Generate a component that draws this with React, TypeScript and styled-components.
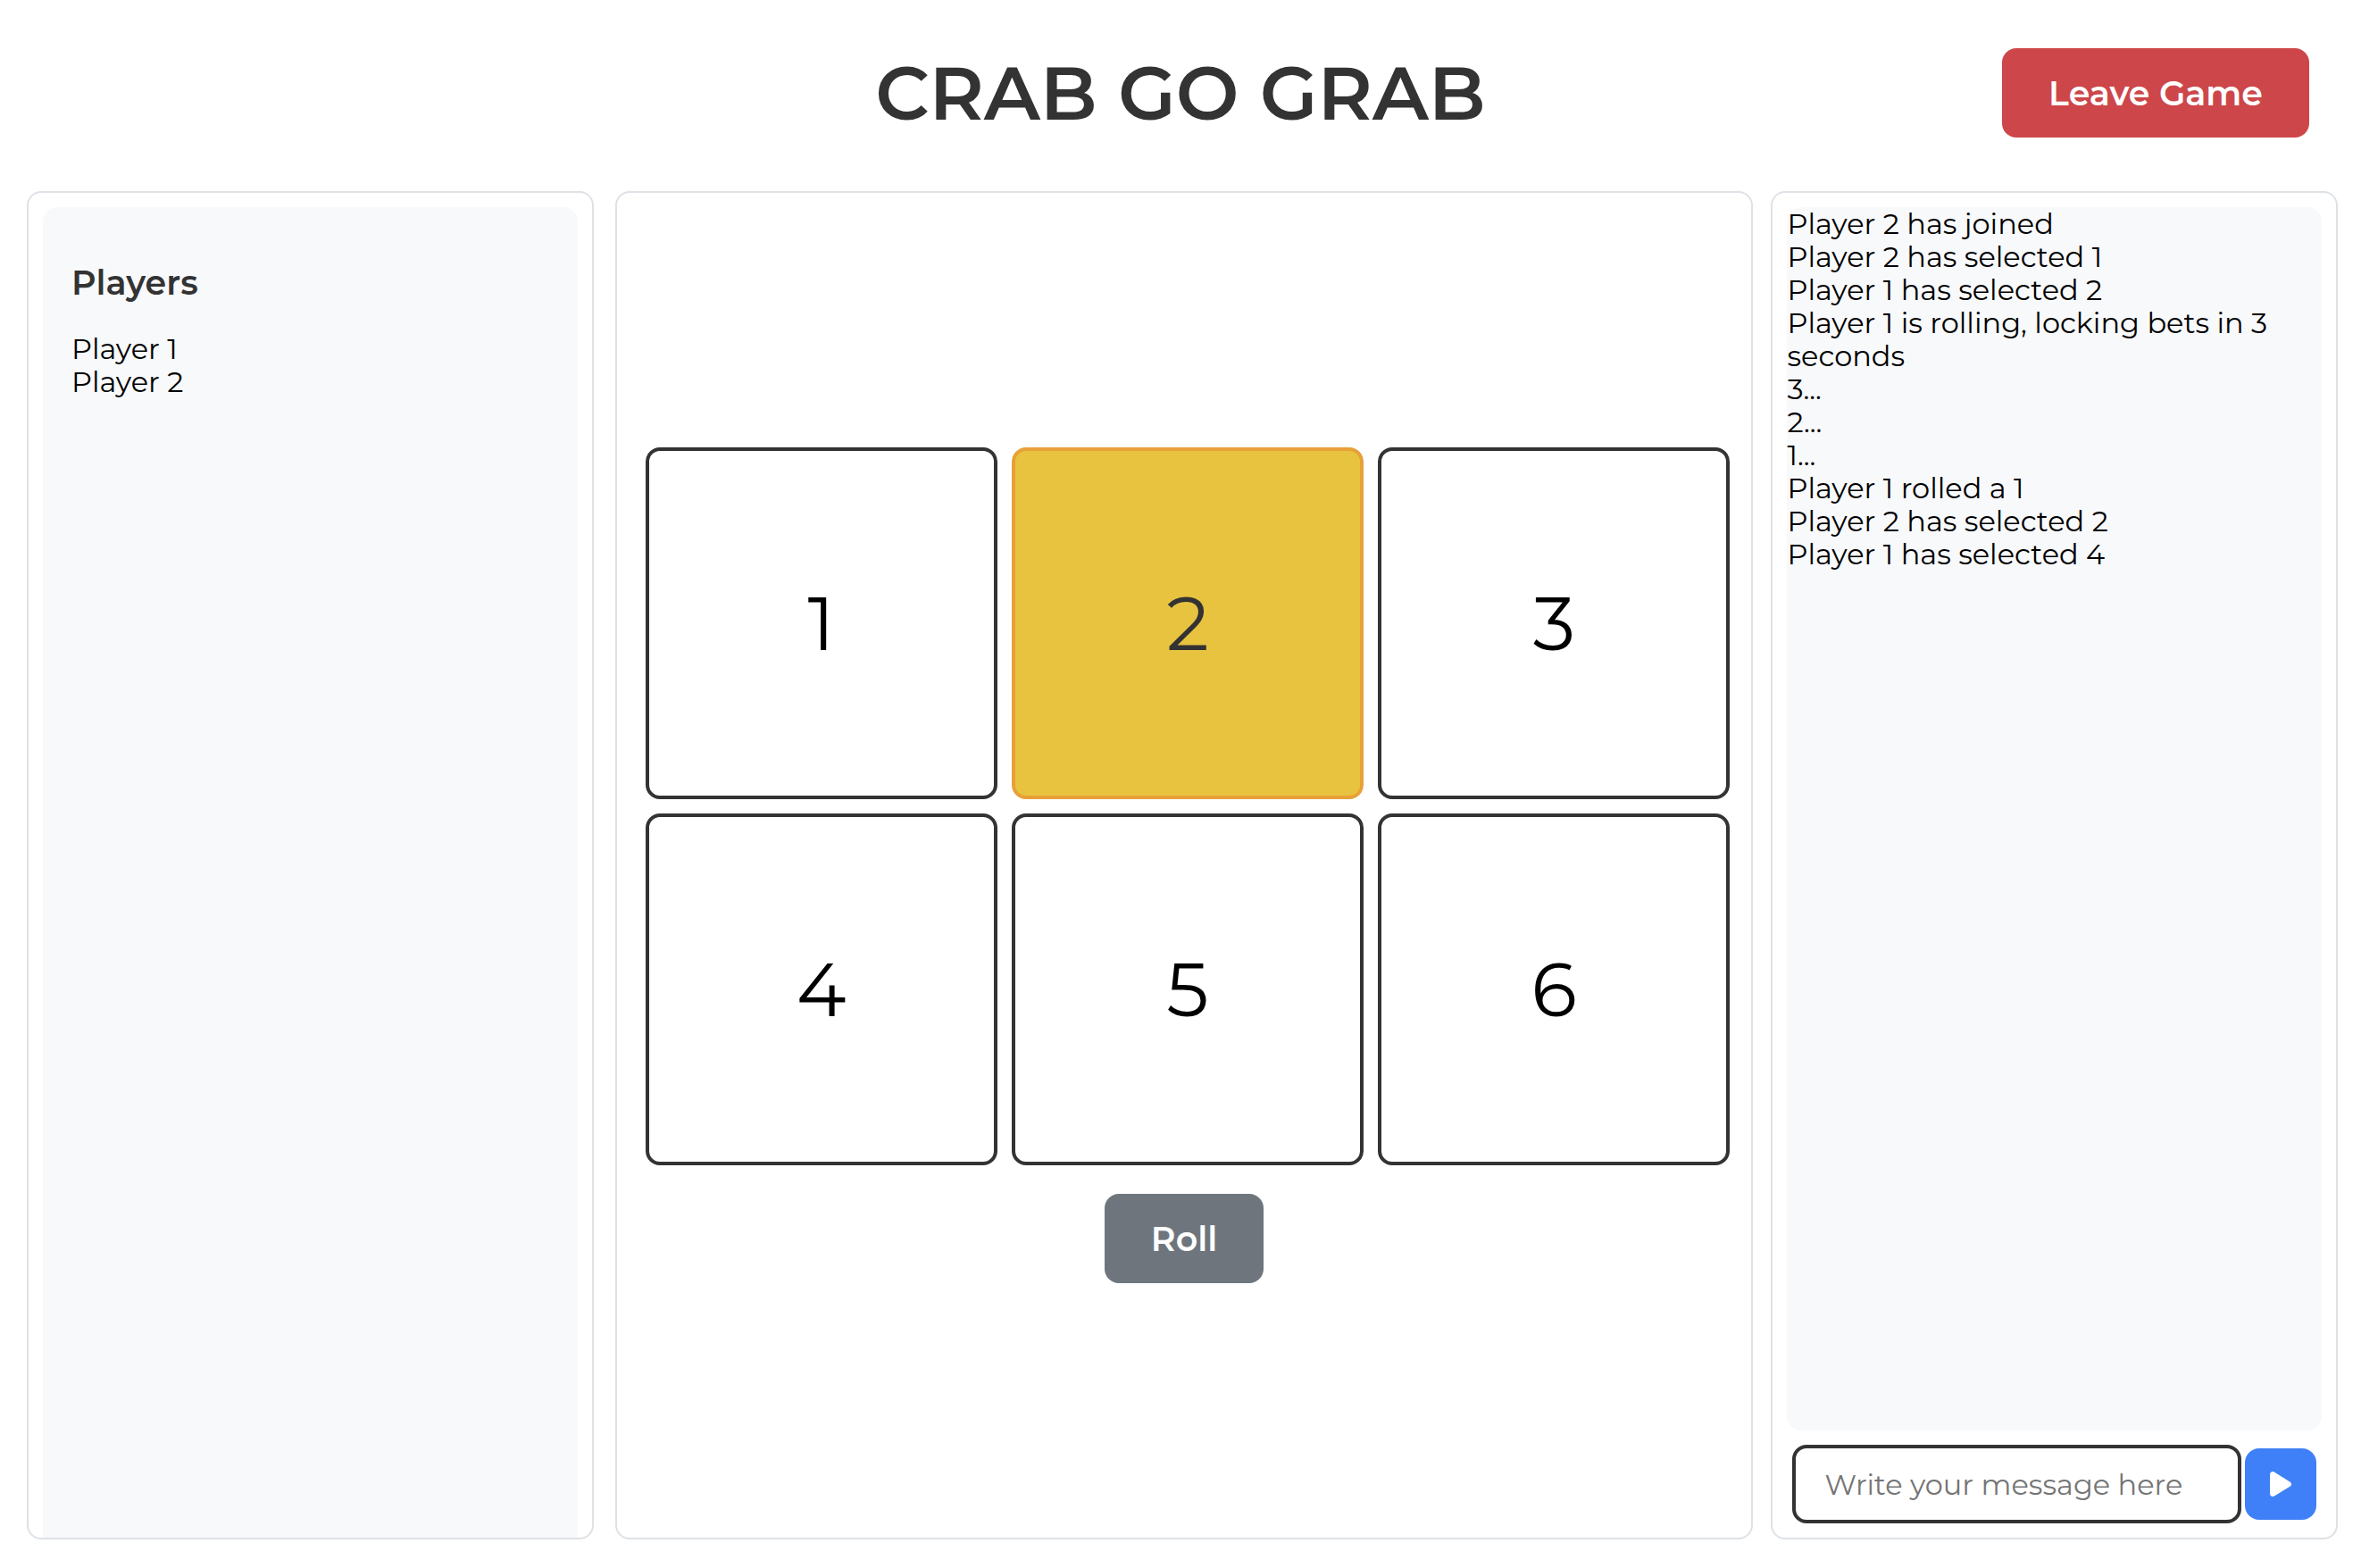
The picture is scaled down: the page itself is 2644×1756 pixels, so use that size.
import React, { useState } from "react";
import styled, { createGlobalStyle } from "styled-components";

const GlobalStyle = createGlobalStyle`
  *, *::before, *::after { box-sizing: border-box; }
  body {
    margin: 0;
    background: #fff;
    color: #000;
    font-family: Montserrat, Inter, "Liberation Sans", sans-serif;
    font-size: 32px;
    line-height: 37px;
  }
  button, input { font: inherit; }
`;

const Page = styled.div`
  display: flex;
  flex-direction: column;
  min-height: 100vh;
  padding-bottom: 32px;
`;

const Header = styled.header`
  display: grid;
  grid-template-columns: 1fr auto 1fr;
  align-items: center;
  padding: 54px 58px 60px;
`;

const Title = styled.h1`
  grid-column: 2;
  margin: 0;
  color: #333;
  font-size: 84px;
  font-weight: 600;
  line-height: 100px;
`;

const Button = styled.button<{ $color: string }>`
  height: 100px;
  padding: 0 52px;
  border: 0;
  border-radius: 16px;
  background: ${(p) => p.$color};
  color: #fff;
  font-size: 38px;
  font-weight: 600;
  cursor: pointer;
`;

const LeaveButton = styled(Button)`
  justify-self: end;
`;

const Main = styled.main`
  display: flex;
  flex: 1;
`;

const Panel = styled.section`
  display: flex;
  flex-direction: column;
  border: 2px solid #dee2e6;
  border-radius: 16px;
`;

const PlayersPanel = styled(Panel)`
  width: 24%;
  margin-left: 30px;
  padding: 16px 16px 0;
`;

const BoardPanel = styled(Panel)`
  flex: 1;
  align-items: center;
  justify-content: center;
  gap: 32px;
  margin: 0 20px 0 24px;
`;

const ChatPanel = styled(Panel)`
  width: 24%;
  margin-right: 26px;
  padding: 16px;
  gap: 16px;
`;

const PlayerBox = styled.div`
  flex: 1;
  padding: 62px 32px;
  border-radius: 16px 16px 0 0;
  background: #f8f9fb;
`;

const PlayersHeading = styled.h2`
  margin: 0 0 32px;
  color: #333;
  font-size: 38px;
  font-weight: 600;
  line-height: 46px;
`;

const PlainList = styled.ul`
  margin: 0;
  padding: 0;
  list-style: none;
`;

const Board = styled.div`
  display: grid;
  grid-template-columns: repeat(3, 1fr);
  gap: 16px;
  width: 100%;
  padding: 0 24px 0 32px;
`;

const Tile = styled.button<{ $selected: boolean }>`
  aspect-ratio: 1;
  padding: 0;
  border: 4px solid ${(p) => (p.$selected ? "#e8a038" : "#333")};
  border-radius: 16px;
  background: ${(p) => (p.$selected ? "#e8c33f" : "#fff")};
  color: ${(p) => (p.$selected ? "#333" : "#000")};
  font-size: 84px;
  line-height: 100px;
  cursor: pointer;
`;

const Log = styled(PlainList)`
  flex: 1;
  border-radius: 16px;
  background: #f8f9fb;
`;

const MessageForm = styled.form`
  display: flex;
  align-items: center;
  gap: 4px;
  padding: 0 6px;
`;

const MessageInput = styled.input`
  flex: 1;
  min-width: 0;
  height: 88px;
  padding: 0 32px;
  border: 4px solid #333;
  border-radius: 16px;
  background: #fff;
  outline: 0;
  &::placeholder { color: #757575; opacity: 1; }
`;

const SendButton = styled.button`
  display: grid;
  place-items: center;
  width: 80px;
  height: 80px;
  padding: 0;
  border: 0;
  border-radius: 16px;
  background: #3f80f8;
  color: #fff;
  cursor: pointer;
`;

const PlayIcon = () => (
  <svg width="24" height="28" viewBox="0 0 24 28" fill="currentColor" aria-hidden="true">
    <path d="M0 3.2C0 .7 2.6-.8 4.8.5L22.4 11.600C24.500 12.900 24.500 15.500 22.400 16.800L4.800 27.500C2.600 28.800 0 27.300 0 24.800Z" />
  </svg>
);

const players = ["Player 1", "Player 2"];
const tiles = [1, 2, 3, 4, 5, 6];
const events = [
  "Player 2 has joined",
  "Player 2 has selected 1",
  "Player 1 has selected 2",
  "Player 1 is rolling, locking bets in 3 seconds",
  "3...",
  "2...",
  "1...",
  "Player 1 rolled a 1",
  "Player 2 has selected 2",
  "Player 1 has selected 4",
];

export default function App() {
  const [selected, setSelected] = useState(2);
  const [message, setMessage] = useState("");

  return (
    <Page>
      <GlobalStyle />
      <Header>
        <Title>CRAB GO GRAB</Title>
        <LeaveButton type="button" $color="#cd464a">Leave Game</LeaveButton>
      </Header>
      <Main>
        <PlayersPanel>
          <PlayerBox>
            <PlayersHeading>Players</PlayersHeading>
            <PlainList>
              {players.map((name) => <li key={name}>{name}</li>)}
            </PlainList>
          </PlayerBox>
        </PlayersPanel>
        <BoardPanel>
          <Board>
            {tiles.map((n) => (
              <Tile
                key={n}
                type="button"
                $selected={n === selected}
                aria-pressed={n === selected}
                onClick={() => setSelected(n)}
              >
                {n}
              </Tile>
            ))}
          </Board>
          <Button type="button" $color="#6e757d">Roll</Button>
        </BoardPanel>
        <ChatPanel>
          <Log>
            {events.map((text) => <li key={text}>{text}</li>)}
          </Log>
          <MessageForm onSubmit={(e) => { e.preventDefault(); setMessage(""); }}>
            <MessageInput
              type="text"
              aria-label="Message"
              placeholder="Write your message here"
              value={message}
              onChange={(e) => setMessage(e.target.value)}
            />
            <SendButton type="submit" aria-label="Send"><PlayIcon /></SendButton>
          </MessageForm>
        </ChatPanel>
      </Main>
    </Page>
  );
}
